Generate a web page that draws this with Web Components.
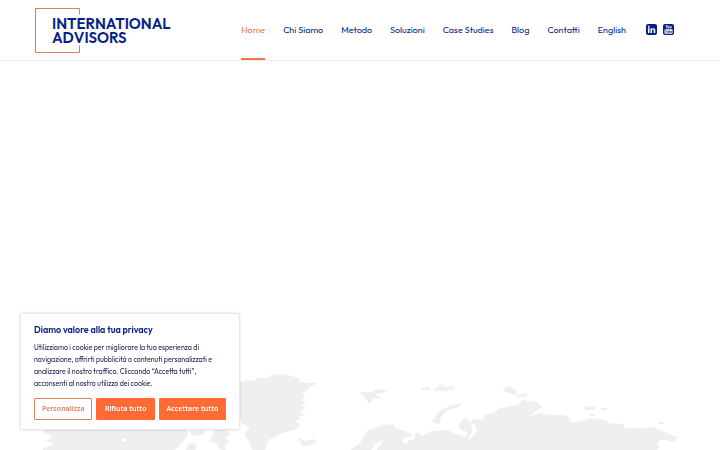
<!DOCTYPE html>
<html lang="it">
<head>
<meta charset="utf-8">
<title>International Advisors</title>
<style>
html,body{margin:0;height:100%}
body{background:#fff;font-family:Outfit,Lato,"Liberation Sans",sans-serif;color:#061e87}
</style>
</head>
<body>
<ia-page></ia-page>
<script>
const define = (name, html) => customElements.define(name, class extends HTMLElement {
  constructor() {
    super();
    this.attachShadow({ mode: "open" }).innerHTML = html;
  }
});

define("ia-logo", `
<style>
:host{display:block}
a{display:grid;grid-template-columns:136px;align-items:center;color:#061e87;text-decoration:none}
svg,span{grid-area:1/1}
svg{width:46px;height:46px}
span{font:600 15px/14px Outfit,Lato,sans-serif;padding:1px 0 0 17px;white-space:nowrap}
</style>
<a href="#"><svg viewBox="0 0 46 46" fill="none" stroke="#e07a58" stroke-width="1" aria-hidden="true"><path d="M44.500 7.500V1.500H.5V45.500H44.500V38.500"/></svg><span>INTERNATIONAL<br>ADVISORS</span></a>`);

customElements.define("ia-nav-item", class extends HTMLElement {
  constructor() {
    super();
    this.attachShadow({ mode: "open" }).innerHTML = `
<style>
:host{display:flex}
a{display:flex;align-items:center;box-sizing:border-box;border-bottom:2px solid transparent;color:#061e87;text-decoration:none;font-size:9px;white-space:nowrap}
:host([current]) a{color:#f0764a;border-bottom-color:#f0764a}
</style>
<a href="#"><slot></slot></a>`;
  }
});

define("ia-social", `
<style>
:host{display:flex;gap:6px}
a{display:block;height:11px}
svg{display:block;width:11px;height:11px}
</style>
<a href="#" aria-label="LinkedIn"><svg viewBox="0 0 22 22"><rect width="22" height="22" rx="4" fill="#061e87"/><g fill="#fff"><circle cx="5.500" cy="5.500" r="1.900"/><path d="M3.900 8.700H7.100V18H3.900zM9 8.700H12V10C12.700 9 13.600 8.400 15 8.400C17.500 8.400 18.600 10 18.600 12.700V18H15.400V13.200C15.400 11.900 15 11.100 13.900 11.100C12.700 11.100 12.200 12 12.200 13.200V18H9z"/></g></svg></a>
<a href="#" aria-label="YouTube"><svg viewBox="0 0 22 22"><rect width="22" height="22" rx="4" fill="#061e87"/><rect x="3" y="10.500" width="16" height="9" rx="2" fill="#fff"/><g fill="none" stroke="#fff" stroke-width="1.500"><path d="M5.500 2L7.300 5.500L9 2M7.300 5.500V9M14 4V7.500Q14 8.400 15 8.400L16.500 7.500V4"/><rect x="10" y="4.300" width="2" height="4" rx="1"/></g><g fill="none" stroke="#061e87" stroke-width="1.100"><path d="M4.500 12.500H7.500M6 12.500V17.500M8.500 14V17H10.500V14M12 12V17H13.500V14.500H12M17.500 17H15.500V14.500H17.500V15.700H15.500"/></g></svg></a>`);

define("ia-header", `
<style>
:host{display:flex;justify-content:space-between;box-sizing:border-box;height:61px;padding:0 46px 0 35px;background:#fff;border-bottom:1px solid #f0f0f0}
ia-logo{align-self:center}
.right{display:flex;gap:20px}
nav{display:flex;gap:18px}
ia-social{align-self:center;padding-bottom:2px}
</style>
<ia-logo></ia-logo>
<div class="right">
<nav><ia-nav-item current>Home</ia-nav-item><ia-nav-item>Chi Siamo</ia-nav-item><ia-nav-item>Metodo</ia-nav-item><ia-nav-item>Soluzioni</ia-nav-item><ia-nav-item>Case Studies</ia-nav-item><ia-nav-item>Blog</ia-nav-item><ia-nav-item>Contatti</ia-nav-item><ia-nav-item>English</ia-nav-item></nav>
<ia-social></ia-social>
</div>`);

define("ia-map", `
<style>
:host{display:block}
svg{display:block;width:100%}
</style>
<svg viewBox="0 370 720 80" fill="#efefef" aria-hidden="true">
<path fill-rule="evenodd" d="M43 430L45 434L52 436L51 439L46 441L53 443L52 446L43 448V450H175L180 445L184 440L188 436L187 429zM121 439L125 438L127 441L123 442zM214 430L212 437L208 441L216 443L219 448L222 450H226L225 445L230 441L225 438L231 435L226 430zM188 444L194 443L197 447L195 450H186zM190 431L203 430L205 434L197 436L191 434z"/>
<path d="M220 382L240 382L246 380L253 381L258 378L267 378L272 375L280 374L292 376L300 379L299 382L317 383L310 387L308 390L303 393L305 397L301 400L306 402L302 405L305 409L301 411L304 415L299 417L301 420L295 420L300 424L297 429L290 431L280 434L276 437L270 439L267 443L265 450H252L249 442L245 436L246 431L250 427L242 424L240 418L220 415z"/>
<path d="M297 439L300 438L304 441L315 439L317 442L307 446L300 445L302 442z"/>
<path d="M360 392L372 392L376 389L388 390L383 393H377L376 395L382 399L374 398L369 404L366 399z"/>
<path d="M421 388L430 387V390L422 390zM435 388L442 384L444 387L454 386L455 388L446 391H434z"/>
<path d="M432 422L439 411L449 406L462 403L459 407L448 410L441 416L440 424z"/>
<path d="M503 389L509 386L517 391L516 395L505 392zM517 396L526 393L528 396L519 398z"/>
<path d="M584 407L591 406L597 408L592 410H585zM600 408H607V410H601zM590 414H595V416H590zM658 422H664V424H658z"/>
<path fill-rule="evenodd" d="M350 450L360 443L368 430L383 425L393 424L396 428L408 432L413 436L403 438L402 442L406 444L410 440L414 440L415 435L418 432L422 436L432 431L447 430L454 433L460 435L465 438L468 433L460 429L459 424L465 417L470 422L474 419L483 420L485 415L495 412L500 408L517 405L523 400L537 402L542 407L528 417L540 413L550 415L560 415L568 416L572 423L585 420L592 418L605 420L610 423L623 424L625 428L640 428L653 427L667 433L677 437L675 442L668 441L662 439L657 443L660 448L656 450zM371 450L375 444L383 440L383 443L377 448V450zM467 438L471 434L473 430L470 423L474 424L477 431L474 434L470 439z"/>
</svg>`);

define("ia-consent", `
<style>
:host{display:block;box-sizing:border-box;width:220px;padding:10px 13px 9px;background:#fff;border:1px solid #e8e8e8;border-radius:2px;box-shadow:0 0 3px #0002}
h2{margin:0 0 6px;font-size:9px;line-height:12px;font-weight:600;color:#061e87}
p{margin:0 0 8px;font-size:7px;line-height:12px;color:#212553}
div{display:flex;gap:4px}
button{box-sizing:border-box;height:22px;padding:0;border:1px solid #ff6a35;border-radius:1px;background:#ff6a35;color:#fff;font:600 7px/10px "Noto Sans",sans-serif;white-space:nowrap;flex:59 1 0}
button:first-child{background:#fff;color:#d9805c;border-color:#d9805c}
button:last-child{flex-grow:68}
</style>
<h2>Diamo valore alla tua privacy</h2>
<p>Utilizziamo i cookie per migliorare la tua esperienza di<br>navigazione, offrirti pubblicità o contenuti personalizzati e<br>analizzare il nostro traffico. Cliccando “Accetta tutti”,<br>acconsenti al nostro utilizzo dei cookie.</p>
<div><button>Personalizza</button><button>Rifiuta tutto</button><button>Accettare tutto</button></div>`);

define("ia-page", `
<style>
:host{display:flex;flex-direction:column;min-height:100vh;position:relative}
main{flex:1;display:flex;align-items:flex-end}
ia-map{width:100%}
ia-consent{position:fixed;left:20px;bottom:20px}
</style>
<ia-header></ia-header>
<main><ia-map></ia-map></main>
<ia-consent role="dialog" aria-label="Privacy"></ia-consent>`);
</script>
</body>
</html>
